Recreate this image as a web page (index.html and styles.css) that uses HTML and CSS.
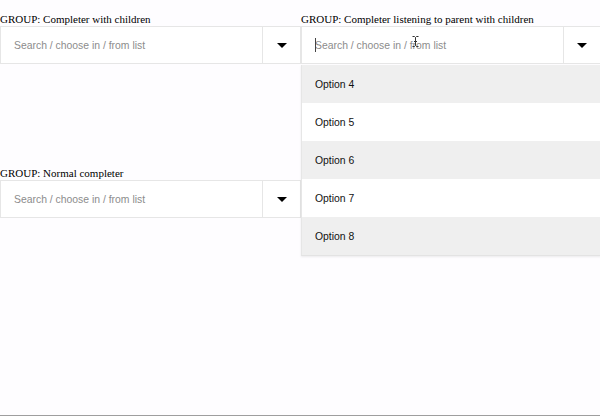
FILE: index.html
```html
<!DOCTYPE html>
<html lang="en">
<head>
<meta charset="utf-8">
<title>Completer groups</title>
<link rel="stylesheet" href="styles.css">
</head>
<body>
<div class="page">
  <div class="grid">
    <section class="group">
      <div class="label">GROUP: Completer with children</div>
      <div class="completer">
        <input class="field" type="text" placeholder="Search / choose in / from list">
        <button class="toggle" type="button" aria-label="Open list">
          <svg class="caret-icon" width="10" height="5" viewBox="0 0 10 5"><path d="M0 0H10L5 5Z"/></svg>
        </button>
      </div>
    </section>

    <section class="group">
      <div class="label">GROUP: Completer listening to parent with children</div>
      <div class="completer is-open">
        <span class="text-caret"></span>
        <input class="field field-focused" type="text" placeholder="Search / choose in / from list">
        <button class="toggle" type="button" aria-label="Close list">
          <svg class="caret-icon" width="10" height="5" viewBox="0 0 10 5"><path d="M0 0H10L5 5Z"/></svg>
        </button>
        <svg class="mouse-ibeam" width="7" height="11" viewBox="0 0 7 11"><path d="M0.5 0.5H2.5L3.5 1.5L4.5 0.5H6.5M3.5 1.5V9.5M0.5 10.5H2.5L3.5 9.5L4.5 10.5H6.5M2 5.5H5"/></svg>
        <ul class="options">
          <li class="option">Option 4</li>
          <li class="option">Option 5</li>
          <li class="option">Option 6</li>
          <li class="option">Option 7</li>
          <li class="option">Option 8</li>
        </ul>
      </div>
    </section>

    <section class="group">
      <div class="label">GROUP: Normal completer</div>
      <div class="completer">
        <input class="field" type="text" placeholder="Search / choose in / from list">
        <button class="toggle" type="button" aria-label="Open list">
          <svg class="caret-icon" width="10" height="5" viewBox="0 0 10 5"><path d="M0 0H10L5 5Z"/></svg>
        </button>
      </div>
    </section>
  </div>
</div>
</body>
</html>
```

FILE: styles.css
```css
html, body {
  margin: 0;
  padding: 0;
  background: #fefdff;
}

.page {
  box-sizing: border-box;
  width: 600px;
  height: 416px;
  border-bottom: 1px solid #9e9e9e;
  overflow: hidden;
}

.grid {
  display: grid;
  grid-template-columns: 301px 300px;
  row-gap: 103px;
  padding-top: 13px;
  align-items: start;
}

.label {
  font-family: "Liberation Serif", "Times New Roman", serif;
  font-size: 11px;
  line-height: 13px;
  height: 13px;
  color: #000;
  white-space: nowrap;
}

.completer {
  position: relative;
  display: flex;
  box-sizing: border-box;
  height: 38px;
  border: 1px solid #e6e6e6;
  background: #fff;
}

.field {
  flex: 1;
  min-width: 0;
  border: 0;
  outline: none;
  margin: 0;
  padding: 0 0 0 13px;
  background: transparent;
  font-family: "Liberation Sans", Arial, sans-serif;
  font-size: 10.4px;
  color: #333;
}

.field::placeholder {
  color: #8c8c8c;
  opacity: 1;
}

.toggle {
  flex: none;
  width: 38px;
  margin: 0;
  padding: 0;
  border: 0;
  border-left: 1px solid #e6e6e6;
  background: transparent;
  display: flex;
  align-items: center;
  justify-content: center;
}

.completer.is-open .toggle {
  width: 37px;
}

.caret-icon {
  display: block;
  fill: #000;
}

.text-caret {
  position: absolute;
  left: 13px;
  top: 11px;
  width: 1px;
  height: 14px;
  background: #444;
}

.mouse-ibeam {
  position: absolute;
  left: 110px;
  top: 9px;
  fill: none;
  stroke: #333;
  stroke-width: 1;
}

.options {
  position: absolute;
  top: 100%;
  left: -1px;
  right: -1px;
  margin: 2px 0 0;
  padding: 0;
  list-style: none;
  border-left: 1px solid #e6e6e6;
  border-bottom: 1px solid #e3e3e3;
  box-shadow: 0 1px 2px rgba(0, 0, 0, 0.08);
  z-index: 2;
}

.option {
  box-sizing: border-box;
  height: 38px;
  display: flex;
  align-items: center;
  padding-left: 13px;
  font-family: "Liberation Sans", Arial, sans-serif;
  font-size: 10.4px;
  color: #111;
  background: #fff;
}

.option:nth-child(odd) {
  background: #efefef;
}
```
